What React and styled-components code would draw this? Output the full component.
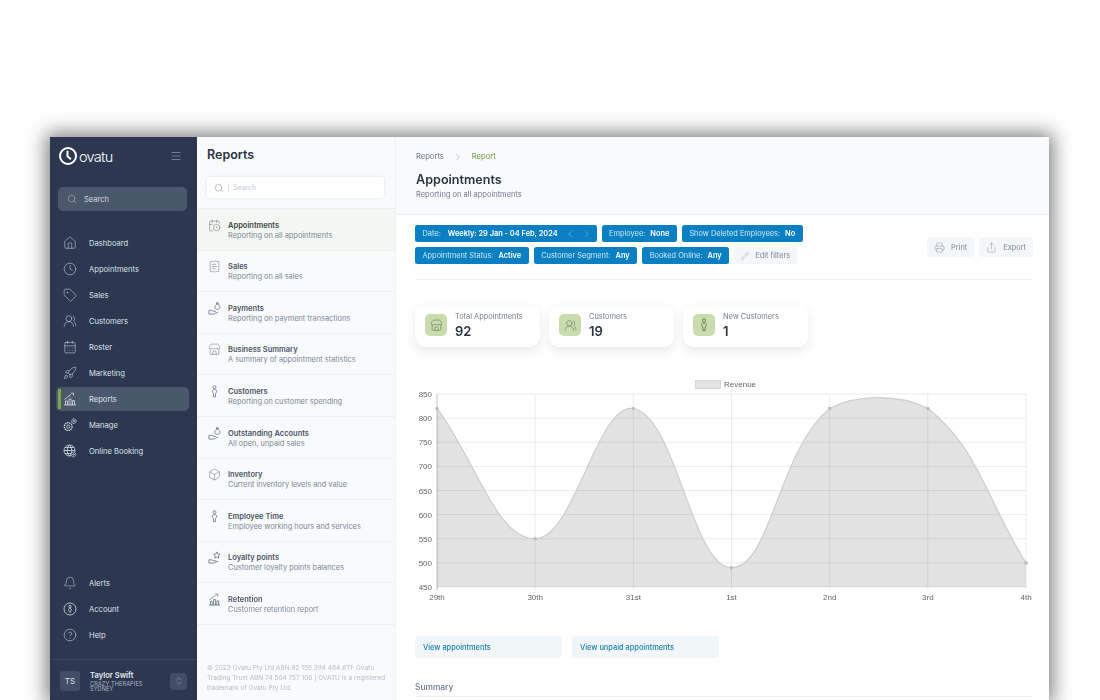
import React from 'react';
import styled, { createGlobalStyle } from 'styled-components';
import {
  House, Clock, Tag, UsersRound, CalendarDays, Rocket, Bell, CircleHelp, Search as SearchIcon,
  Menu, ChevronsUpDown, ChevronLeft, ChevronRight, CalendarClock, ReceiptText, Store, Box, Printer, Share, Pencil,
} from 'lucide-react';

const Global = createGlobalStyle`
  html, body { margin: 0; padding: 0; background: #fff; overflow: hidden; }
  body { font-family: Inter, "Liberation Sans", sans-serif; }
  * { box-sizing: border-box; }
`;

const Page = styled.div`
  width: 1100px;
  height: 700px;
  padding: 137px 51px 0 50px;
  overflow: hidden;
`;
const Frame = styled.div`
  display: grid;
  grid-template-columns: 147px 199px 1fr;
  height: 563px;
  overflow: hidden;
  box-shadow: 0 0 18px 4px rgba(0, 0, 0, 0.5);
  background: #fff;
  filter: blur(0.45px);
`;
const Sidebar = styled.aside`
  background: #2b3850;
  display: flex;
  flex-direction: column;
  color: #dfe4ea;
`;
const LogoRow = styled.div`
  height: 38px;
  padding: 0 15px 0 8px;
  display: flex;
  align-items: center;
  justify-content: space-between;
`;
const Logo = styled.div`
  display: flex;
  align-items: center;
  gap: 1px;
  color: #fff;
  font-size: 14.5px;
  letter-spacing: -0.7px;
  font-weight: 300;
`;
const SideSearch = styled.div`
  margin: 12px 10px 0 8px;
  height: 24px;
  border-radius: 5px;
  background: #4a586c;
  display: flex;
  align-items: center;
  gap: 7px;
  padding-left: 9px;
  font-size: 7.5px;
  color: #d5dbe3;
`;
const SideNav = styled.nav`
  display: flex;
  flex-direction: column;
  gap: 2px;
  margin-top: ${p => p.$top || 0}px;
`;
const SideItem = styled.div`
  position: relative;
  height: 24px;
  margin: 0 8px 0 6px;
  border-radius: 5px;
  display: flex;
  align-items: center;
  gap: 12px;
  padding-left: 7px;
  font-size: 7.6px;
  font-weight: 400;
  color: #dde2e8;
  background: ${p => (p.$active ? '#4a586c' : 'transparent')};
  &::before {
    content: '';
    display: ${p => (p.$active ? 'block' : 'none')};
    position: absolute;
    left: 2px;
    top: 2px;
    bottom: 2px;
    width: 2.5px;
    background: #7fa83f;
  }
`;
const SideIcon = styled.span`
  width: 14px;
  height: 14px;
  display: flex;
  align-items: center;
  justify-content: center;
  color: #d9dfe6;
`;
const Spacer = styled.div`
  flex: 1;
`;
const UserBar = styled.div`
  height: 41px;
  margin-top: 12px;
  border-top: 1px solid #3a4761;
  display: flex;
  align-items: center;
  padding: 2px 10px 0 10px;
`;
const Avatar = styled.div`
  width: 20px;
  height: 20px;
  border-radius: 3px;
  background: #414e66;
  font-size: 8px;
  color: #dde2e8;
  display: flex;
  align-items: center;
  justify-content: center;
  margin-right: 10px;
`;
const UserText = styled.div`
  flex: 1;
`;
const UserName = styled.div`
  font-size: 7.6px;
  font-weight: 600;
  color: #e6eaef;
  margin-bottom: 2px;
`;
const UserOrg = styled.div`
  font-size: 5.6px;
  line-height: 5px;
  color: #aeb6c2;
  letter-spacing: 0.1px;
`;
const Toggle = styled.div`
  width: 17px;
  height: 17px;
  border-radius: 4px;
  background: #414e66;
  display: flex;
  align-items: center;
  justify-content: center;
  color: #c9d0da;
`;

const Middle = styled.section`
  background: #f8fafc;
  border-right: 1px solid #eef1f5;
  display: flex;
  flex-direction: column;
`;
const MiddleTitle = styled.h2`
  margin: 10px 0 0 10px;
  font-size: 12.5px;
  line-height: 16px;
  font-weight: 600;
  color: #2b3444;
`;
const MiddleSearch = styled.div`
  margin: 14px 11px 10px 10px;
  height: 21px;
  background: #fff;
  border-radius: 3px;
  box-shadow: 0 0 3px rgba(40, 60, 90, 0.12);
  display: flex;
  align-items: center;
  gap: 4px;
  padding-left: 7px;
  font-size: 7px;
  color: #c3cad4;
`;
const Caret = styled.span`
  width: 1px;
  height: 8px;
  background: #dfe3e9;
`;
const ReportList = styled.div`
  display: flex;
  flex-direction: column;
  border-top: 1px solid #eef1f4;
`;
const ReportRow = styled.div`
  height: 41.6px;
  display: flex;
  gap: 7px;
  padding: 9.7px 0 0 11px;
  border-bottom: 1px solid #eef1f4;
  background: ${p => (p.$active ? '#f3f6f2' : 'transparent')};
`;
const ReportIcon = styled.span`
  width: 13px;
  height: 14px;
  color: #5c6878;
  display: flex;
  flex: none;
`;
const ReportTitle = styled.div`
  font-size: 7.5px;
  line-height: 10px;
  font-weight: 600;
  margin-top: 2px;
  color: ${p => (p.$active ? '#3d4b45' : '#4b5565')};
`;
const ReportSub = styled.div`
  font-size: 7.4px;
  line-height: 10px;
  color: #7d8896;
`;
const Legal = styled.div`
  margin-top: auto;
  padding: 0 8px 7px 10px;
  font-size: 6.5px;
  line-height: 10px;
  color: #b7bec9;
  white-space: nowrap;
`;

const Main = styled.main`
  display: flex;
  flex-direction: column;
  min-width: 0;
`;
const Header = styled.header`
  height: 78px;
  background: #f9fafc;
  border-bottom: 1px solid #eef0f4;
  padding: 15px 0 0 20px;
`;
const Crumbs = styled.div`
  display: flex;
  align-items: center;
  gap: 9px;
  font-size: 7.6px;
  line-height: 10px;
  color: #6b7585;
`;
const CrumbNow = styled.span`
  color: #6f9a3c;
`;
const PageTitle = styled.h1`
  margin: 9px 0 0;
  font-size: 12.6px;
  line-height: 18px;
  font-weight: 600;
  color: #2b3444;
`;
const PageSub = styled.div`
  margin-top: 1px;
  font-size: 7.5px;
  line-height: 10px;
  color: #717b8a;
`;
const Body = styled.div`
  padding: 10px 16px 0 19px;
`;
const FilterBar = styled.div`
  display: flex;
  justify-content: space-between;
  align-items: flex-end;
  padding-bottom: 15px;
  border-bottom: 1px solid #eef0f3;
`;
const Filters = styled.div`
  display: flex;
  flex-wrap: wrap;
  gap: 5px;
  max-width: 395px;
`;
const Chip = styled.div`
  height: 17px;
  border-radius: 2.5px;
  background: #0a80c2;
  color: #cfe6f4;
  font-size: 7.4px;
  display: flex;
  align-items: center;
  padding: 0 7.5px;
  white-space: nowrap;
  gap: 5px;
`;
const DateChip = styled(Chip)`
  gap: 7px;
  padding-right: 5px;
`;
const ChipValue = styled.b`
  color: #fff;
  font-weight: 600;
`;
const GhostChip = styled.div`
  height: 17px;
  border-radius: 3px;
  background: #f4f7f9;
  color: #7c8695;
  font-size: 7.4px;
  display: flex;
  align-items: center;
  gap: 6px;
  padding: 0 7px;
  white-space: nowrap;
`;
const Actions = styled.div`
  display: flex;
  gap: 5px;
  margin-bottom: 7px;
`;
const ActionBtn = styled.div`
  height: 20px;
  border-radius: 4px;
  background: #f4f7f9;
  color: #7c8695;
  font-size: 7.4px;
  display: flex;
  align-items: center;
  gap: 6px;
  padding: 0 7px;
`;
const Cards = styled.div`
  display: flex;
  gap: 9px;
  margin-top: 25px;
`;
const Card = styled.div`
  width: 125px;
  height: 42px;
  border-radius: 10px;
  background: #fff;
  box-shadow: 0 4px 10px rgba(40, 50, 70, 0.1);
  display: flex;
  align-items: center;
  gap: 8px;
  padding: 0 0 2px 10px;
`;
const CardIcon = styled.div`
  width: 22px;
  height: 22px;
  border-radius: 5px;
  background: #c9dcb0;
  color: #55713a;
  display: flex;
  align-items: center;
  justify-content: center;
`;
const CardLabel = styled.div`
  font-size: 7.4px;
  line-height: 10px;
  color: #737d8c;
`;
const CardValue = styled.div`
  font-size: 13px;
  line-height: 16px;
  margin-top: 1px;
  font-weight: 600;
  color: #2b3444;
`;
const ChartWrap = styled.div`
  margin-top: 25px;
  height: 235px;
`;
const Links = styled.div`
  display: flex;
  gap: 10px;
  margin-top: 29px;
`;
const LinkBtn = styled.div`
  width: 147px;
  height: 22px;
  border-radius: 4px;
  background: #f1f6f9;
  color: #1b7eae;
  font-size: 7.4px;
  font-weight: 500;
  display: flex;
  align-items: center;
  padding-left: 8px;
`;
const SummaryTitle = styled.div`
  margin-top: 23px;
  padding-bottom: 3px;
  border-bottom: 1px solid #eef0f3;
  font-size: 8.4px;
  line-height: 12px;
  font-weight: 500;
  color: #707a88;
`;

/* Drawn icons */
const Glyph = ({ s = 14, children }) => (
  <svg width={s} height={s} viewBox="0 0 14 14" fill="none" stroke="currentColor" strokeWidth="0.8">{children}</svg>
);
const Person = ({ s }) => (
  <Glyph s={s}>
    <circle cx="7" cy="2.4" r="1.6" />
    <path d="M7 5c-1.6 0-2.4.7-2.4 1.7 0 1 .9 1.6 1.2 2.3l.2 3.6h2l.2-3.6c.3-.7 1.2-1.3 1.2-2.3C9.4 5.7 8.6 5 7 5z" />
  </Glyph>
);
const Growth = ({ s }) => (
  <Glyph s={s}>
    <path d="M1 13h12M2.5 13V9h2v4M6 13V7h2v6M9.5 13V8.5h2V13M1.5 7.5 8 2.5M10.5 1.2H8M10.5 1.2V3.6" />
  </Glyph>
);
const HandStar = ({ s }) => (
  <Glyph s={s}>
    <path d="M9.5 1l1.1 2.3 2.4.3-1.8 1.7.5 2.4-2.2-1.2-2.2 1.2.5-2.4L6 3.6l2.4-.3z" />
    <path d="M1 9.5h3l2 1h3M1 9.5V13h5l5-2" />
  </Glyph>
);
const HandBag = ({ s }) => (
  <Glyph s={s}>
    <path d="M9 .8h2.2l-.5 1.5c1.2.7 2.2 2 2.2 3.4 0 1.4-1 2.2-2.8 2.2S7.3 7.1 7.3 5.7c0-1.4 1-2.7 2.2-3.4z" />
    <path d="M9 2.3h1.7M1 9h3l2 1h2.500M1 9v4h5l5-2.200" />
  </Glyph>
);
const AccountGlyph = ({ s }) => (
  <Glyph s={s}>
    <circle cx="7" cy="7" r="6" />
    <circle cx="7" cy="4.6" r="1.2" />
    <path d="M7 6.6c-1 0-1.5.5-1.5 1.2 0 .8 1 1 1 2.4h1c0-1.4 1-1.6 1-2.4 0-.7-.5-1.2-1.5-1.2z" />
  </Glyph>
);
const Gears = ({ s }) => (
  <Glyph s={s}>
    <circle cx="5.2" cy="8.6" r="3.9" strokeWidth="1.2" strokeDasharray="1.4 .7" />
    <circle cx="5.2" cy="8.6" r="1.6" />
    <circle cx="10.8" cy="3.2" r="2.3" strokeWidth="1" strokeDasharray="1 .5" />
    <circle cx="10.8" cy="3.2" r=".8" />
  </Glyph>
);
const GlobeGear = ({ s }) => (
  <Glyph s={s}>
    <circle cx="6.5" cy="6.5" r="5.5" />
    <path d="M1 6.5h11M6.5 1c-3 3-3 8 0 11M6.5 1c3 3 3 8 0 11M2 3.5h9M2 9.500h6" />
    <circle cx="10.5" cy="10.5" r="2.3" fill="#2b3850" strokeDasharray="1 .4" />
    <circle cx="10.5" cy="10.5" r=".8" />
  </Glyph>
);
const LogoMark = () => (
  <svg width="20" height="20" viewBox="0 0 20 20" fill="none" stroke="#fff">
    <circle cx="10" cy="10" r="8" strokeWidth="2" />
    <path d="M9.5 4.8v5.4l3.4 3" strokeWidth="2" />
  </svg>
);

const ic = { size: 14, strokeWidth: 0.9 };
const top = [
  ['Dashboard', <House {...ic} />],
  ['Appointments', <Clock {...ic} />],
  ['Sales', <Tag {...ic} />],
  ['Customers', <UsersRound {...ic} />],
  ['Roster', <CalendarDays {...ic} />],
  ['Marketing', <Rocket {...ic} />],
  ['Reports', <Growth />, true],
  ['Manage', <Gears />],
  ['Online Booking', <GlobeGear />],
];
const bottom = [
  ['Alerts', <Bell {...ic} />],
  ['Account', <AccountGlyph />],
  ['Help', <CircleHelp {...ic} />],
];
const ri = { size: 13, strokeWidth: 0.9 };
const reports = [
  ['Appointments', 'Reporting on all appointments', <CalendarClock {...ri} />, true],
  ['Sales', 'Reporting on all sales', <ReceiptText {...ri} />],
  ['Payments', 'Reporting on payment transactions', <HandBag s={13} />],
  ['Business Summary', 'A summary of appointment statistics', <Store {...ri} />],
  ['Customers', 'Reporting on customer spending', <Person s={13} />],
  ['Outstanding Accounts', 'All open, unpaid sales', <HandBag s={13} />],
  ['Inventory', 'Current inventory levels and value', <Box {...ri} />],
  ['Employee Time', 'Employee working hours and services', <Person s={13} />],
  ['Loyalty points', 'Customer loyalty points balances', <HandStar s={13} />],
  ['Retention', 'Customer retention report', <Growth s={13} />],
];

/* Chart */
const X0 = 22, STEP = 98.17, YTOP = 22, YH = 193;
const yOf = v => YTOP + ((850 - v) / 400) * YH;
const data = [820, 550, 820, 490, 820, 820, 500];
const labels = ['29th', '30th', '31st', '1st', '2nd', '3rd', '4th'];
const pts = data.map((v, i) => [X0 + i * STEP, yOf(v)]);
const RIGHT = X0 + 6 * STEP;
const BASE = yOf(450);
const capY = y => Math.min(BASE, Math.max(YTOP, y));
const capX = x => Math.min(RIGHT, Math.max(X0, x));
const spline = () => {
  const t = 0.4;
  const cps = pts.map((p, i) => {
    const a = pts[i - 1] || p, b = pts[i + 1] || p;
    const d1 = Math.hypot(p[0] - a[0], p[1] - a[1]), d2 = Math.hypot(b[0] - p[0], b[1] - p[1]);
    const sum = d1 + d2 || 1;
    return {
      prev: [capX(p[0] - (t * d1 / sum) * (b[0] - a[0])), capY(p[1] - (t * d1 / sum) * (b[1] - a[1]))],
      next: [capX(p[0] + (t * d2 / sum) * (b[0] - a[0])), capY(p[1] + (t * d2 / sum) * (b[1] - a[1]))],
    };
  });
  let d = `M${pts[0][0]} ${pts[0][1]}`;
  for (let i = 1; i < pts.length; i++) {
    d += ` C${cps[i - 1].next[0]} ${cps[i - 1].next[1]} ${cps[i].prev[0]} ${cps[i].prev[1]} ${pts[i][0]} ${pts[i][1]}`;
  }
  return d;
};
const curve = spline();
const Chart = () => {
  const ticks = [850, 800, 750, 700, 650, 600, 550, 500, 450];
  return (
    <svg width="618" height="235" viewBox="0 0 618 235" fontFamily="'Liberation Sans', sans-serif" fontSize="8" fill="#666">
      <rect x="280.5" y="8.5" width="25" height="8" fill="#e2e2e2" stroke="#d6d6d6" />
      <text x="309" y="15">Revenue</text>
      {ticks.map(v => (
        <g key={v}>
          <line x1={X0} x2={RIGHT} y1={yOf(v)} y2={yOf(v)} stroke="#000" strokeOpacity="0.08" />
          <text x={X0 - 5} y={yOf(v) + 3} textAnchor="end">{v}</text>
        </g>
      ))}
      {pts.map((p, i) => (
        <g key={i}>
          <line x1={p[0]} x2={p[0]} y1={YTOP} y2={BASE + 3} stroke="#000" strokeOpacity={i === 0 ? 0.25 : 0.08} />
          <text x={p[0]} y={BASE + 13} textAnchor="middle">{labels[i]}</text>
        </g>
      ))}
      <path d={`${curve} L${RIGHT} ${BASE} L${X0} ${BASE} Z`} fill="#000" fillOpacity="0.115" />
      <path d={curve} fill="none" stroke="#cdcdcd" strokeWidth="1.2" />
      {pts.map((p, i) => (
        <circle key={i} cx={p[0]} cy={p[1]} r="1.8" fill="#bdbdbd" />
      ))}
    </svg>
  );
};

const filtersA = [
  ['Appointment Status:', 'Active'],
  ['Customer Segment:', 'Any'],
  ['Booked Online:', 'Any'],
];

export default function App() {
  return (
    <Page>
      <Global />
      <Frame>
        <Sidebar>
          <LogoRow>
            <Logo><LogoMark />ovatu</Logo>
            <Menu size={12} strokeWidth={1.1} color="#aeb6c2" />
          </LogoRow>
          <SideSearch><SearchIcon size={10} strokeWidth={1} />Search</SideSearch>
          <SideNav $top={20}>
            {top.map(([t, icon, active]) => (
              <SideItem key={t} $active={active}><SideIcon>{icon}</SideIcon>{t}</SideItem>
            ))}
          </SideNav>
          <Spacer />
          <SideNav>
            {bottom.map(([t, icon]) => (
              <SideItem key={t}><SideIcon>{icon}</SideIcon>{t}</SideItem>
            ))}
          </SideNav>
          <UserBar>
            <Avatar>TS</Avatar>
            <UserText>
              <UserName>Taylor Swift</UserName>
              <UserOrg>CRAZY THERAPIES<br />SYDNEY</UserOrg>
            </UserText>
            <Toggle><ChevronsUpDown size={10} strokeWidth={1} /></Toggle>
          </UserBar>
        </Sidebar>

        <Middle>
          <MiddleTitle>Reports</MiddleTitle>
          <MiddleSearch><SearchIcon size={10} strokeWidth={1} color="#6b7585" /><Caret />Search</MiddleSearch>
          <ReportList>
            {reports.map(([t, s, icon, active]) => (
              <ReportRow key={t} $active={active}>
                <ReportIcon>{icon}</ReportIcon>
                <div>
                  <ReportTitle $active={active}>{t}</ReportTitle>
                  <ReportSub>{s}</ReportSub>
                </div>
              </ReportRow>
            ))}
          </ReportList>
          <Legal>
            © 2023 Ovatu Pty Ltd ABN 92 159 394 484 ATF Ovatu<br />
            Trading Trust ABN 74 504 757 106 | OVATU is a registered<br />
            trademark of Ovatu Pty Ltd.
          </Legal>
        </Middle>

        <Main>
          <Header>
            <Crumbs>Reports <ChevronRight size={10} strokeWidth={1} /> <CrumbNow>Report</CrumbNow></Crumbs>
            <PageTitle>Appointments</PageTitle>
            <PageSub>Reporting on all appointments</PageSub>
          </Header>
          <Body>
            <FilterBar>
              <Filters>
                <DateChip>Date: <ChipValue>Weekly: 29 Jan - 04 Feb, 2024</ChipValue><ChevronLeft size={10} strokeWidth={1} /><ChevronRight size={10} strokeWidth={1} /></DateChip>
                <Chip>Employee: <ChipValue>None</ChipValue></Chip>
                <Chip>Show Deleted Employees: <ChipValue>No</ChipValue></Chip>
                {filtersA.map(([a, b]) => <Chip key={a}>{a} <ChipValue>{b}</ChipValue></Chip>)}
                <GhostChip><Pencil size={8} strokeWidth={1} />Edit filters</GhostChip>
              </Filters>
              <Actions>
                <ActionBtn><Printer size={11} strokeWidth={1} />Print</ActionBtn>
                <ActionBtn><Share size={11} strokeWidth={1} />Export</ActionBtn>
              </Actions>
            </FilterBar>
            <Cards>
              <Card>
                <CardIcon><Store size={13} strokeWidth={1} /></CardIcon>
                <div><CardLabel>Total Appointments</CardLabel><CardValue>92</CardValue></div>
              </Card>
              <Card>
                <CardIcon><UsersRound size={13} strokeWidth={1} /></CardIcon>
                <div><CardLabel>Customers</CardLabel><CardValue>19</CardValue></div>
              </Card>
              <Card>
                <CardIcon><Person /></CardIcon>
                <div><CardLabel>New Customers</CardLabel><CardValue>1</CardValue></div>
              </Card>
            </Cards>
            <ChartWrap><Chart /></ChartWrap>
            <Links>
              <LinkBtn>View appointments</LinkBtn>
              <LinkBtn>View unpaid appointments</LinkBtn>
            </Links>
            <SummaryTitle>Summary</SummaryTitle>
          </Body>
        </Main>
      </Frame>
    </Page>
  );
}
